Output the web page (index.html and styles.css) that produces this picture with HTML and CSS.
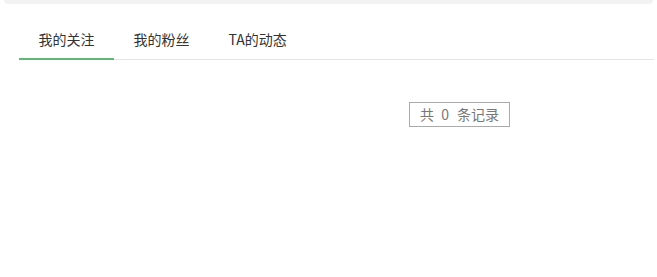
FILE: index.html
```html
<!DOCTYPE html>
<html lang="zh-CN">
<head>
    <meta charset="UTF-8">
    <meta name="viewport" content="width=device-width, initial-scale=1.0">
    <title>我的关注</title>
    <link rel="stylesheet" href="styles.css">
</head>
<body>

    <!-- top edge of the card above -->
    <div class="top-edge"></div>

    <!-- Tabs -->
    <div class="tabs">
        <div class="tab active">我的关注</div>
        <div class="tab">我的粉丝</div>
        <div class="tab">TA的动态</div>
    </div>

    <!-- Pager -->
    <div class="pager">
        <span class="total">共 <b>0</b> 条记录</span>
    </div>

</body>
</html>
```

FILE: styles.css
```css
/* Page */
body {
    margin: 0;
    background: #fff;
    font-family: "Noto Sans CJK SC", "Noto Sans", sans-serif;
    color: #333;
}

.top-edge {
    height: 4px;
    margin: 0 4px;
    background: #f2f2f2;
    border-radius: 0 0 8px 8px;
}

/* Tabs */
.tabs {
    display: flex;
    margin: 16px 3px 0 19px;
    border-bottom: 1px solid #e4e4e4;
}

.tab {
    height: 38px;
    line-height: 38px;
    padding: 0 19.5px;
    font-size: 14px;
    border-bottom: 2px solid transparent;
    margin-bottom: -1px;
    cursor: pointer;
}

.tab.active {
    border-bottom-color: #5fb878;
}

/* Pager */
.pager {
    display: flex;
    padding: 42px 0 0 409px;
}

.total {
    display: inline-block;
    height: 23px;
    line-height: 23px;
    padding: 0 10px;
    border: 1px solid #aaa;
    color: #777;
    font-size: 14px;
}

.total b {
    font-weight: normal;
    margin: 0 5px 0 4px;
}
```
